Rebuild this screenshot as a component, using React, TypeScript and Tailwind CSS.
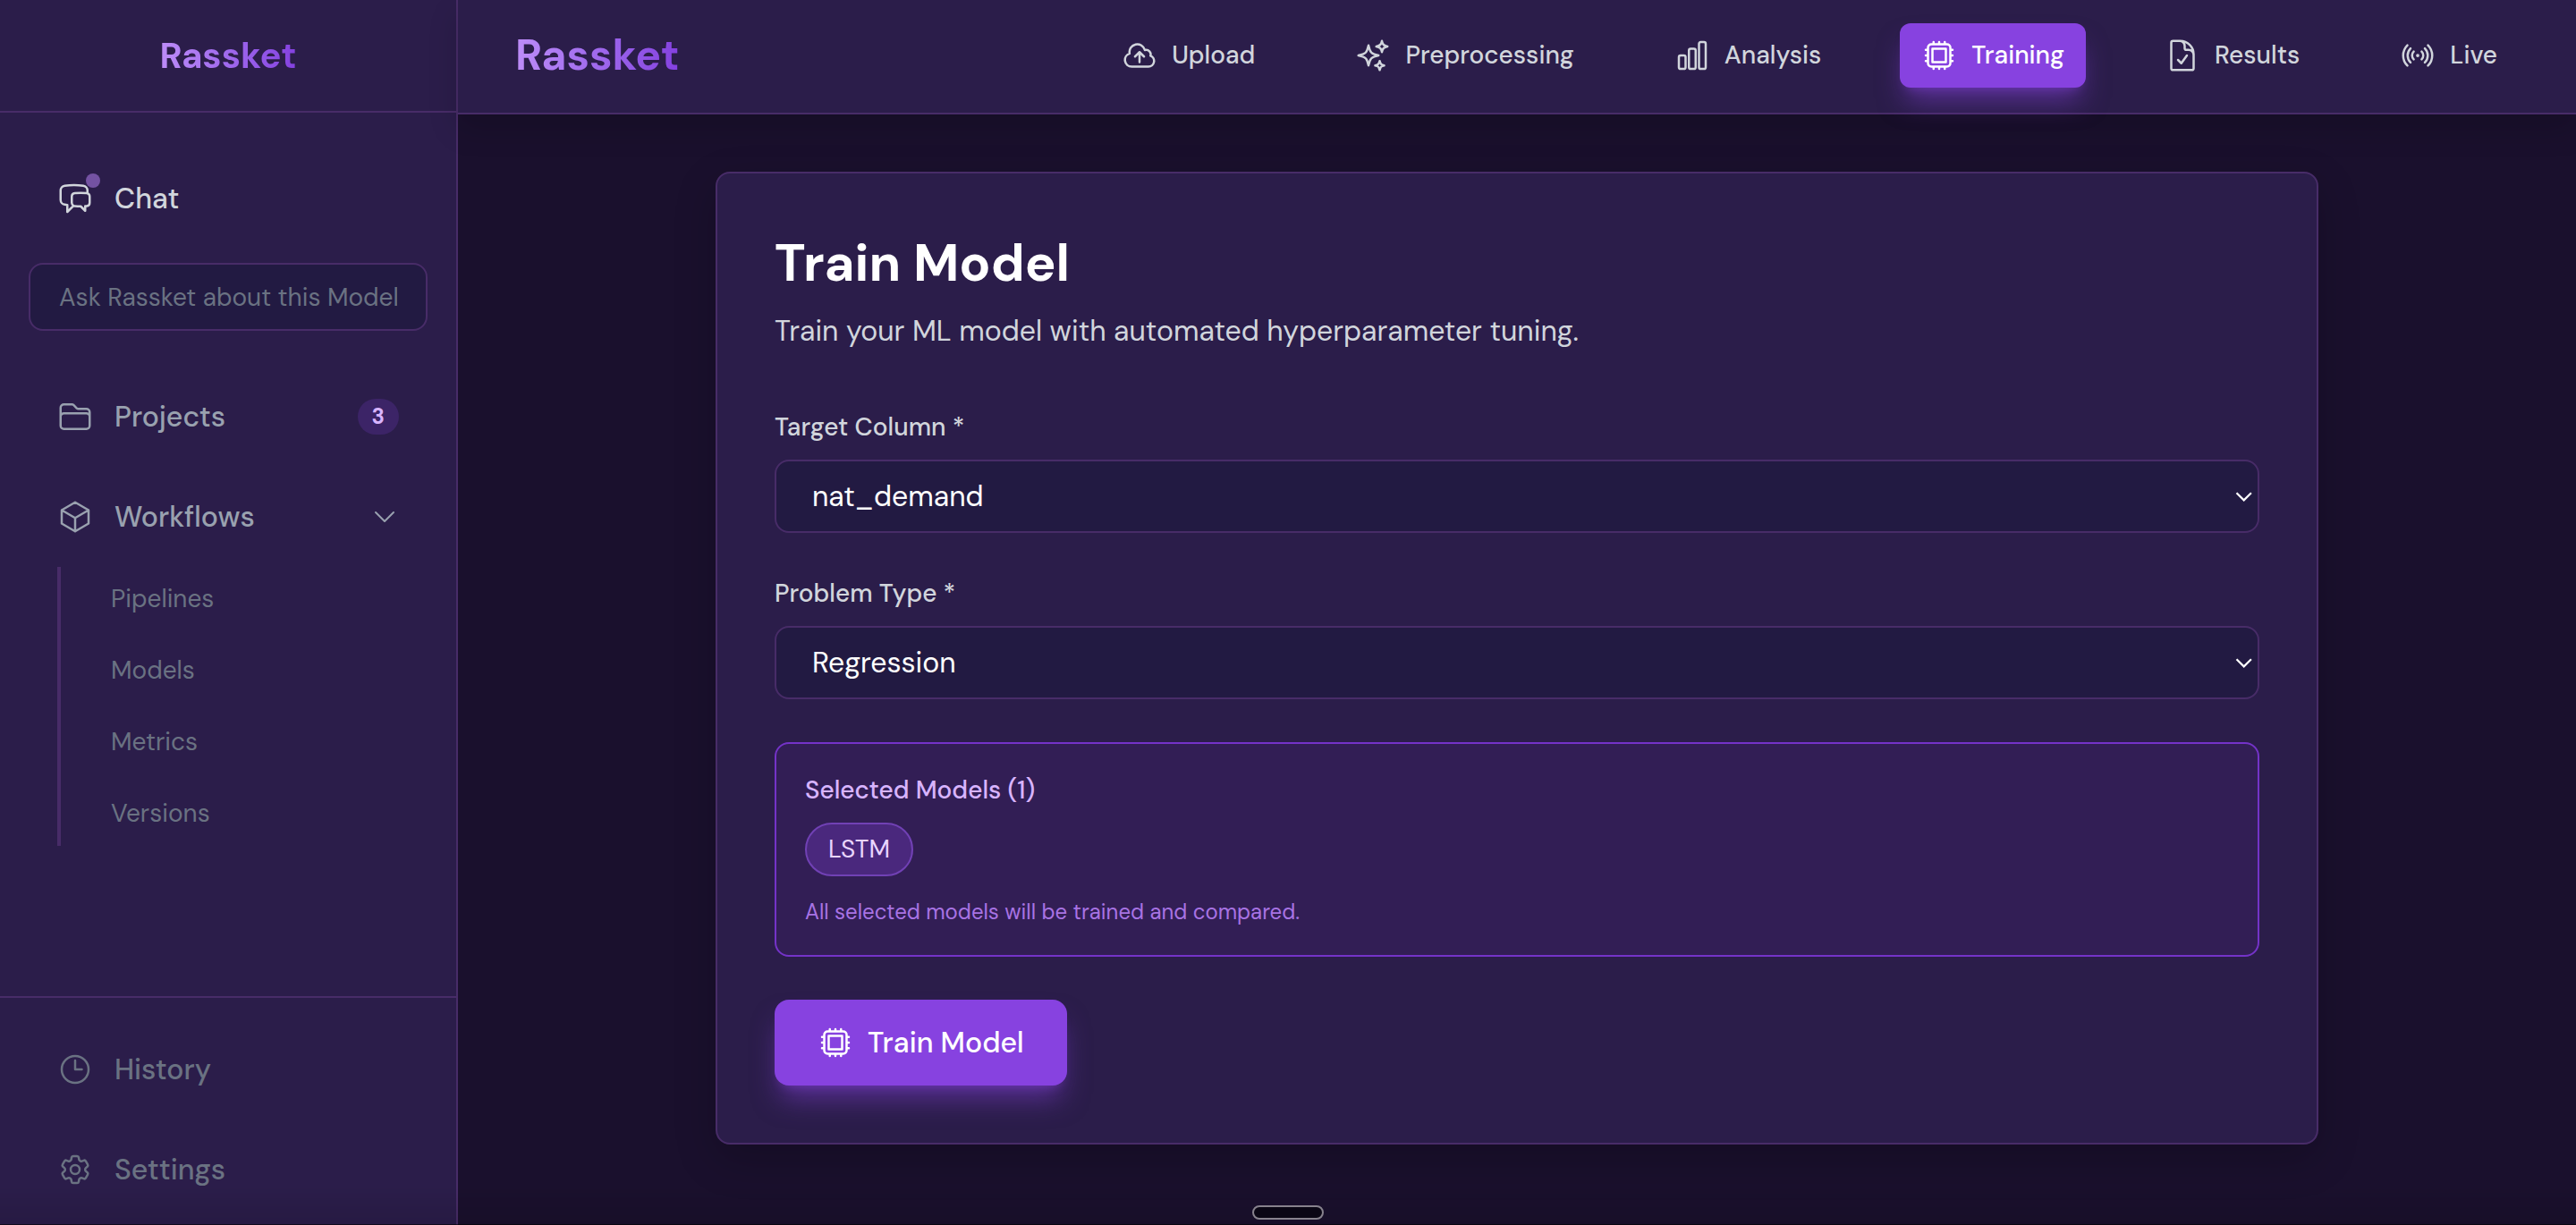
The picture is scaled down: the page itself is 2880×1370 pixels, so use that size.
import React, { useState } from 'react'
import {
  HiOutlineChartBar,
  HiOutlineChatBubbleLeftRight,
  HiOutlineChevronDown,
  HiOutlineClock,
  HiOutlineCloudArrowUp,
  HiOutlineCog6Tooth,
  HiOutlineCpuChip,
  HiOutlineCube,
  HiOutlineDocumentCheck,
  HiOutlineFolder,
  HiOutlineSignal,
  HiOutlineSparkles,
} from 'react-icons/hi2'

const NAV_ITEMS = [
  { id: 'upload', label: 'Upload', icon: HiOutlineCloudArrowUp },
  { id: 'preprocessing', label: 'Preprocessing', icon: HiOutlineSparkles },
  { id: 'analysis', label: 'Analysis', icon: HiOutlineChartBar },
  { id: 'training', label: 'Training', icon: HiOutlineCpuChip },
  { id: 'results', label: 'Results', icon: HiOutlineDocumentCheck },
  { id: 'live', label: 'Live', icon: HiOutlineSignal },
]

const WORKFLOW_LINKS = ['Pipelines', 'Models', 'Metrics', 'Versions']

const SELECTED_MODELS = ['LSTM']

interface SidebarItemProps {
  icon: React.ElementType
  label: string
  className: string
  dot?: boolean
  onClick?: () => void
  children?: React.ReactNode
}

function SidebarItem({ icon: Icon, label, className, dot, onClick, children }: SidebarItemProps) {
  return (
    <button
      type="button"
      onClick={onClick}
      className={`flex h-24 w-full items-center gap-6 rounded-2xl px-8 text-[32px] font-medium ${className}`}
    >
      <span className="relative shrink-0">
        <Icon className="size-10" />
        {dot && <span className="absolute -top-2 -right-2 size-4 rounded-full bg-[#7452a3]" />}
      </span>
      <span className="flex-1 text-left">{label}</span>
      {children}
    </button>
  )
}

function Sidebar() {
  const [open, setOpen] = useState(true)

  return (
    <aside className="flex w-128 shrink-0 flex-col border-r-2 border-[#482c68] bg-[#2b1d4a]">
      <div className="flex h-[126px] items-center justify-center border-b-2 border-[#482c68]">
        <span className="bg-gradient-to-r from-[#bd8cf8] to-[#8440e0] bg-clip-text text-[40px] font-bold text-transparent">
          Rassket
        </span>
      </div>

      <nav className="flex-1 px-8 pt-12">
        <SidebarItem icon={HiOutlineChatBubbleLeftRight} label="Chat" className="text-gray-300" dot />
        <input
          type="text"
          aria-label="Ask Rassket"
          placeholder="Ask Rassket about this Model"
          className="mt-6 mb-12 h-19 w-full rounded-2xl border-2 border-[#482c68] bg-[#221a42] px-8 text-[28px] text-white outline-none placeholder:text-gray-500"
        />
        <div className="flex flex-col gap-4">
          <SidebarItem icon={HiOutlineFolder} label="Projects" className="text-gray-400">
            <span className="rounded-full bg-[#3c2467] px-4 py-1 text-2xl font-bold text-[#d8b4fe]">3</span>
          </SidebarItem>
          <SidebarItem icon={HiOutlineCube} label="Workflows" className="text-gray-400" onClick={() => setOpen(!open)}>
            <HiOutlineChevronDown className="size-8" />
          </SidebarItem>
        </div>
        {open && (
          <ul className="mt-2 ml-8 flex flex-col gap-2 border-l-4 border-[#482c68] pl-6">
            {WORKFLOW_LINKS.map((link) => (
              <li key={link}>
                <a href={`#${link.toLowerCase()}`} className="flex h-18 items-center px-8 text-[28px] text-gray-500">
                  {link}
                </a>
              </li>
            ))}
          </ul>
        )}
      </nav>

      <div className="flex flex-col gap-4 border-t-2 border-[#482c68] px-8 pt-8 pb-3.5">
        <SidebarItem icon={HiOutlineClock} label="History" className="text-gray-500" />
        <SidebarItem icon={HiOutlineCog6Tooth} label="Settings" className="text-gray-500" />
      </div>
    </aside>
  )
}

function Header({ active, onChange }: { active: string; onChange: (id: string) => void }) {
  return (
    <header className="flex h-32 items-center justify-between border-b-2 border-[#482c68] bg-[#2b1d4a] px-16 pb-0.5 shadow-[0_16px_32px_rgba(0,0,0,0.15)]">
      <span className="bg-gradient-to-r from-[#bd8cf8] to-[#8440e0] bg-clip-text text-5xl font-bold text-transparent">
        Rassket
      </span>
      <nav className="flex items-center gap-16">
        {NAV_ITEMS.map(({ id, label, icon: Icon }) => (
          <button
            key={id}
            type="button"
            onClick={() => onChange(id)}
            className={`flex h-18 items-center gap-4 rounded-xl px-6 text-[28px] font-medium ${
              active === id
                ? 'bg-[#8742e0] text-white shadow-[0_20px_30px_-6px_rgba(135,66,224,0.5),0_8px_12px_-8px_rgba(135,66,224,0.5)]'
                : 'text-gray-300'
            }`}
          >
            <Icon className="size-10" />
            {label}
          </button>
        ))}
      </nav>
    </header>
  )
}

interface SelectFieldProps {
  id: string
  label: string
  value: string
  options: string[]
  onChange: (value: string) => void
}

function SelectField({ id, label, value, options, onChange }: SelectFieldProps) {
  return (
    <div className="flex flex-col gap-4">
      <label htmlFor={id} className="text-[28px] leading-10 font-medium text-gray-300">
        {label} *
      </label>
      <div className="relative">
        <select
          id={id}
          value={value}
          onChange={(e) => onChange(e.target.value)}
          className="block h-[82px] w-full appearance-none rounded-2xl border-2 border-[#482c68] bg-[#221a42] px-10 text-[32px] text-white outline-none"
        >
          {options.map((option) => (
            <option key={option}>{option}</option>
          ))}
        </select>
        <svg
          viewBox="0 0 20 20"
          fill="none"
          stroke="currentColor"
          strokeWidth="2.2"
          className="pointer-events-none absolute top-8 right-2 size-5 text-white"
        >
          <path d="M2.5 5.2l8.2 8.2 8.2-8.2" />
        </svg>
      </div>
    </div>
  )
}

function TrainModelCard() {
  const [target, setTarget] = useState('nat_demand')
  const [problemType, setProblemType] = useState('Regression')

  return (
    <section className="rounded-2xl border-2 border-[#482c68] bg-[#2b1d4a] p-16 shadow-[0_16px_48px_rgba(0,0,0,0.2)]">
      <h1 className="text-[58px] leading-18 font-bold text-white">Train Model</h1>
      <p className="mt-4 text-[32px] leading-12 text-gray-300">Train your ML model with automated hyperparameter tuning.</p>

      <form className="mt-16 flex flex-col gap-12" onSubmit={(e) => e.preventDefault()}>
        <SelectField
          id="target-column"
          label="Target Column"
          value={target}
          options={['nat_demand']}
          onChange={setTarget}
        />
        <SelectField
          id="problem-type"
          label="Problem Type"
          value={problemType}
          options={['Regression', 'Classification']}
          onChange={setProblemType}
        />

        {/* Selected models */}
        <div className="rounded-2xl border-2 border-[#7433c8] bg-[#321e55] p-8">
          <h2 className="text-[28px] leading-10 font-medium text-[#d8b4fe]">Selected Models ({SELECTED_MODELS.length})</h2>
          <div className="mt-4 flex flex-wrap gap-4">
            {SELECTED_MODELS.map((model) => (
              <span key={model} className="rounded-full border-2 border-[#7141b5] bg-[#4a287d] px-6 py-2 text-[28px] leading-10 text-[#e9d5ff]">
                {model}
              </span>
            ))}
          </div>
          <p className="mt-6 text-2xl text-[#a873e4]">All selected models will be trained and compared.</p>
        </div>

        <button
          type="submit"
          className="flex h-24 items-center gap-4 self-start rounded-2xl bg-[#8742e0] px-12 text-[32px] font-medium text-white shadow-[0_20px_30px_-6px_rgba(135,66,224,0.5),0_8px_12px_-8px_rgba(135,66,224,0.5)]"
        >
          <HiOutlineCpuChip className="size-10" />
          Train Model
        </button>
      </form>
    </section>
  )
}

export default function App() {
  const [active, setActive] = useState('training')

  return (
    <div className="relative flex min-h-screen bg-[#1a102d] font-['DM_Sans',Inter,sans-serif]">
      <Sidebar />
      <div className="flex min-w-0 flex-1 flex-col">
        <Header active={active} onChange={setActive} />
        <main className="flex flex-1 justify-center px-16 pt-16">
          <div className="w-full max-w-[1792px]">
            <TrainModelCard />
          </div>
        </main>
      </div>

      {/* Bottom fade and drag handle */}
      <div className="pointer-events-none absolute inset-x-0 bottom-0 h-11 border-b border-black/60 bg-gradient-to-t from-black/10 to-transparent" />
      <div className="absolute bottom-1.5 left-1/2 h-4 w-20 -translate-x-1/2 rounded-full border-2 border-[#87828d] bg-[#0a0614]" />
    </div>
  )
}
